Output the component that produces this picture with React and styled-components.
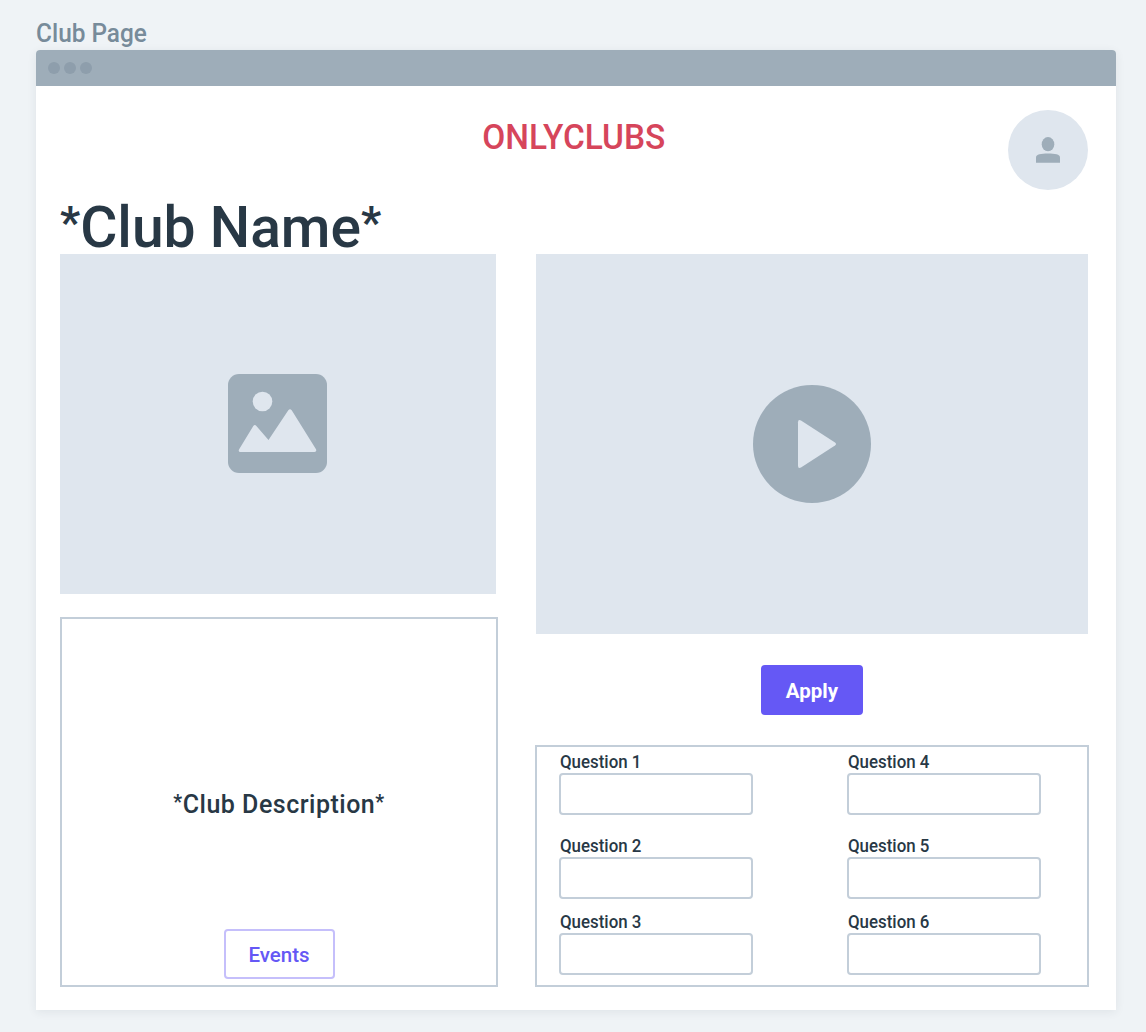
import React from 'react';
import styled, { createGlobalStyle } from 'styled-components';

const GlobalStyle = createGlobalStyle`
  *, *::before, *::after { box-sizing: border-box; }
  body {
    margin: 0;
    background: #eff3f6;
    color: #283845;
    font-family: Roboto, "Liberation Sans", sans-serif;
    font-weight: 500;
  }
  button, input { font: inherit; }
`;

const Page = styled.div`
  height: 1032px;
  padding: 16px 30px 22px 36px;
  overflow: hidden;
`;

const ArtboardName = styled.div`
  height: 34px;
  line-height: 35px;
  font-size: 25px;
  transform: scaleX(0.975);
  transform-origin: left;
  color: #778b9a;
  white-space: nowrap;
`;

const BrowserWindow = styled.div`
  width: 1080px;
  height: 960px;
  background: #fff;
  border-radius: 4px 4px 0 0;
  box-shadow: 0 2px 10px rgba(40, 56, 69, 0.08);
`;

const TitleBar = styled.div`
  display: flex;
  align-items: center;
  gap: 4px;
  height: 36px;
  padding-left: 12px;
  background: #9eadb9;
  border-radius: 4px 4px 0 0;
`;

const Dot = styled.span`
  width: 12px;
  height: 12px;
  border-radius: 50%;
  background: #8e9eac;
`;

const Body = styled.main`
  padding: 24px 27px 23px 24px;
`;

const Header = styled.header`
  display: grid;
  grid-template-columns: 80px 1fr 80px;
  height: 80px;
  padding-right: 1px;
`;

const Brand = styled.div`
  grid-column: 2;
  justify-self: center;
  margin-right: 1px;
  line-height: 56px;
  font-size: 35px;
  transform: scaleX(0.955);
  color: #d6455b;
  white-space: nowrap;
`;

const Avatar = styled.div`
  display: grid;
  place-items: center;
  width: 80px;
  height: 80px;
  border-radius: 50%;
  background: #dfe6ee;
`;

const ClubName = styled.h1`
  margin: 0;
  height: 64px;
  line-height: 75px;
  font-size: 58px;
  font-weight: 500;
  transform: scaleX(0.982);
  transform-origin: left;
  white-space: nowrap;
`;

const Asterisk = styled.span`
  display: inline-block;
  line-height: 1;
  font-size: 0.78em;
  font-weight: 700;
  vertical-align: 0.2em;
`;

const Columns = styled.div`
  display: grid;
  grid-template-columns: 438px 554px;
  justify-content: space-between;
`;

const Column = styled.section`
  display: flex;
  flex-direction: column;
  align-items: ${(p) => p.$align || 'flex-start'};
`;

const Media = styled.div`
  display: grid;
  place-items: center;
  width: ${(p) => p.$width}px;
  height: ${(p) => p.$height}px;
  background: #dfe6ee;
`;

const Panel = styled.div`
  width: 100%;
  border: 2px solid #c3ced9;
`;

const DescriptionPanel = styled(Panel)`
  display: grid;
  grid-template-rows: 1fr 50px;
  justify-items: center;
  height: 370px;
  margin-top: 23px;
  padding-bottom: 6px;
`;

const Description = styled.p`
  margin: 62px 0 0;
  align-self: center;
  line-height: 30px;
  font-size: 25px;
  letter-spacing: 0.5px;
  white-space: nowrap;
`;

const Button = styled.button`
  width: ${(p) => p.$width}px;
  height: 50px;
  padding: 2px 0 0;
  border-radius: 4px;
  font-size: 20.5px;
  cursor: pointer;
  border: 2px solid ${(p) => (p.$primary ? '#6558f5' : '#c5bffb')};
  background: ${(p) => (p.$primary ? '#6558f5' : '#fff')};
  color: ${(p) => (p.$primary ? '#fff' : '#6558f5')};
  font-weight: ${(p) => (p.$primary ? 700 : 500)};
`;

const ApplyRow = styled.div`
  padding: 31px 0 30px;
`;

const FormPanel = styled(Panel)`
  display: grid;
  grid-template-columns: 194px 194px;
  grid-template-rows: 84px 76px 62px;
  grid-auto-flow: column;
  column-gap: 94px;
  height: 242px;
  padding: 6px 0 0 22px;
`;

const Field = styled.label`
  display: flex;
  flex-direction: column;
`;

const FieldLabel = styled.span`
  height: 20px;
  line-height: 19px;
  padding-left: 1px;
  font-size: 17.5px;
  transform: scaleX(0.965);
  transform-origin: left;
`;

const Input = styled.input`
  width: 194px;
  height: 42px;
  padding: 0 10px;
  border: 2px solid #c3ced9;
  border-radius: 4px;
  background: #fff;
`;

const PersonIcon = () => (
  <svg width="24" height="26" viewBox="0 0 24 26" fill="#9eadb9">
    <ellipse cx="12" cy="7.2" rx="6.3" ry="7.1" />
    <path d="M0 25.8V20.5C0 17.5 5 16.6 12 16.6S24 17.5 24 20.5V25.8Z" />
  </svg>
);

const ImageIcon = () => (
  <svg width="100" height="100" viewBox="0 0 100 100">
    <rect width="99" height="99" rx="11" fill="#9eadb9" />
    <circle cx="34.5" cy="27.5" r="9.8" fill="#dfe6ee" />
    <path
      fill="#dfe6ee"
      d="M11 75.5 25.3 52Q26.8 50 28.4 52L40.5 66 60.3 36.3Q62 34 63.7 36.3L88 75.2Q89 78 86.5 78H12.5Q10 78 11 75.5Z"
    />
  </svg>
);

const PlayIcon = () => (
  <svg width="118" height="118" viewBox="0 0 118 118">
    <circle cx="59" cy="59" r="59" fill="#9eadb9" />
    <path fill="#dfe6ee" d="M45 37.2Q45 34 48 35.5L82 57.5Q84 59 82 60.5L48 82.5Q45 84 45 80.8Z" />
  </svg>
);

const questions = [1, 2, 3, 4, 5, 6];

export default function App() {
  return (
    <Page>
      <GlobalStyle />
      <ArtboardName>Club Page</ArtboardName>
      <BrowserWindow>
        <TitleBar>
          <Dot />
          <Dot />
          <Dot />
        </TitleBar>
        <Body>
          <Header>
            <Brand>ONLYCLUBS</Brand>
            <Avatar>
              <PersonIcon />
            </Avatar>
          </Header>
          <ClubName>
            <Asterisk>*</Asterisk>Club Name<Asterisk>*</Asterisk>
          </ClubName>
          <Columns>
            <Column>
              <Media $width={436} $height={340}>
                <ImageIcon />
              </Media>
              <DescriptionPanel>
                <Description>
                  <Asterisk>*</Asterisk>Club Description<Asterisk>*</Asterisk>
                </Description>
                <Button $width={111}>Events</Button>
              </DescriptionPanel>
            </Column>
            <Column $align="center">
              <Media $width={552} $height={380}>
                <PlayIcon />
              </Media>
              <ApplyRow>
                <Button $width={102} $primary>Apply</Button>
              </ApplyRow>
              <FormPanel>
                {questions.map((n) => (
                  <Field key={n}>
                    <FieldLabel>Question {n}</FieldLabel>
                    <Input type="text" />
                  </Field>
                ))}
              </FormPanel>
            </Column>
          </Columns>
        </Body>
      </BrowserWindow>
    </Page>
  );
}
